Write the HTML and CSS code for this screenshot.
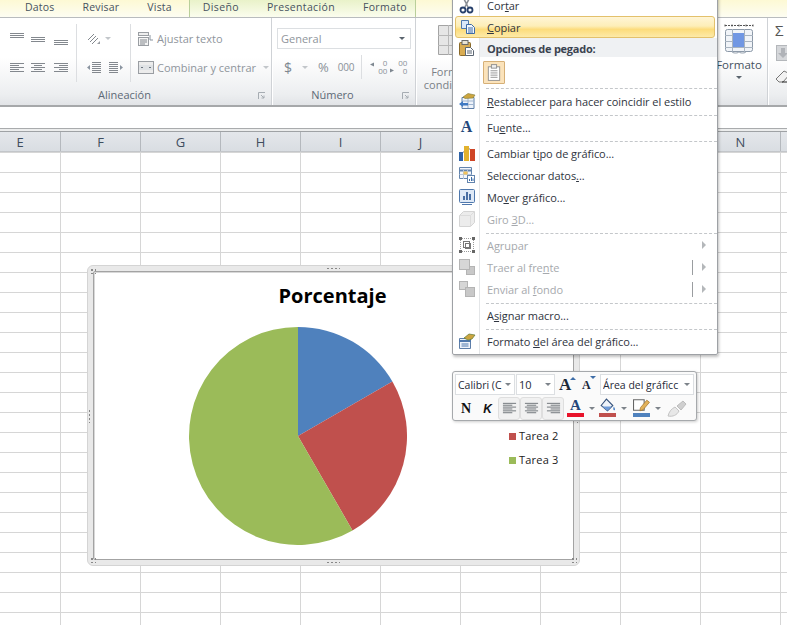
FILE: index.html
```html
<!DOCTYPE html>
<html lang="es">
<head>
<meta charset="utf-8">
<title>Excel</title>
<link rel="stylesheet" href="styles.css">
</head>
<body>
<div class="app">
  <nav class="tabs">
    <span class="tab">Datos</span><span class="tab">Revisar</span><span class="tab">Vista</span>
    <div class="ctx-tabs"><span class="tab">Diseño</span><span class="tab">Presentación</span><span class="tab">Formato</span></div>
  </nav>

  <section class="ribbon">
    <div class="group g-align">
      <div class="g-body">
        <div class="cluster c-align">
          <svg class="ic16" viewBox="0 0 16 16"><path class="ln" d="M1 2.500h14M1 4.500h14M1 6.500h14"/></svg>
          <svg class="ic16" viewBox="0 0 16 16"><path class="ln" d="M1 6.500h14M1 8.500h14M1 10.500h14"/></svg>
          <svg class="ic16" viewBox="0 0 16 16"><path class="ln" d="M1 9.500h14M1 11.500h14M1 13.500h14"/></svg>
          <svg class="ic16" viewBox="0 0 16 16"><path class="ln" d="M1 3.500h14M1 5.500h9M1 7.500h14M1 9.500h9M1 11.500h14"/></svg>
          <svg class="ic16" viewBox="0 0 16 16"><path class="ln" d="M1 3.500h14M4 5.500h8M1 7.500h14M4 9.500h8M1 11.500h14"/></svg>
          <svg class="ic16" viewBox="0 0 16 16"><path class="ln" d="M1 3.500h14M6 5.500h9M1 7.500h14M6 9.500h9M1 11.500h14"/></svg>
        </div>
        <div class="cluster c-orient">
          <div class="ic-pair">
            <svg class="ic16" viewBox="0 0 16 16"><path class="ln" d="M2 9l6-6M4 11l6-6M6 13l6-6"/><path d="M11 13l3-3v3z" fill="#9a9ea3"/></svg>
            <span class="caret light"></span>
          </div>
          <div class="ic-pair indent">
            <svg class="ic16" viewBox="0 0 16 16"><path class="ln" d="M6 2.500h9M6 4.500h9M6 6.500h9M6 8.500h9M6 10.500h9M6 12.500h9"/><path d="M1 7.500l3-2.500v5z" fill="#8a94a0"/></svg>
            <svg class="ic16" viewBox="0 0 16 16"><path class="ln" d="M1 2.500h9M1 4.500h9M1 6.500h9M1 8.500h9M1 10.500h9M1 12.500h9"/><path d="M15 7.500l-3-2.500v5z" fill="#8a94a0"/></svg>
          </div>
        </div>
        <div class="cluster c-wrap">
          <div class="ic-label">
            <svg class="ic16" viewBox="0 0 16 16"><rect x="0.500" y="1.500" width="10" height="3" fill="#eee" stroke="#9a9ea3"/><rect x="0.500" y="6.500" width="10" height="8" fill="#f4f4f4" stroke="#9a9ea3"/><path class="ln" d="M2 9h7M2 11h7M2 13h5"/><path d="M12 4v5h3" fill="none" stroke="#8a94a0"/></svg>
            <span>Ajustar texto</span>
          </div>
          <div class="ic-label">
            <svg class="ic16" viewBox="0 0 16 16"><rect x="0.500" y="1.500" width="15" height="12" fill="#ececec" stroke="#9a9ea3"/><rect x="1" y="5" width="14" height="5" fill="#dfe2e5"/><path d="M3 7.500h2M11 7.500h2" stroke="#6d7680"/></svg>
            <span>Combinar y centrar</span><span class="caret light m6"></span>
          </div>
        </div>
      </div>
      <div class="g-label"><span>Alineación</span><svg class="launch" viewBox="0 0 8 8"><path d="M.5 7V.500H7M3 3l3 3M6 3.500V6H3.500" fill="none" stroke="#a6acb2"/></svg></div>
    </div>

    <div class="group g-num">
      <div class="g-body col">
        <div class="combo num-combo"><span>General</span><span class="caret dark"></span></div>
        <div class="num-row">
          <span class="sym dollar">$</span><span class="caret light"></span>
          <span class="sym pct">%</span><span class="sym mil">000</span>
          <span class="v-sep"></span>
          <span class="dec"><svg viewBox="0 0 18 16"><path d="M0 5.500l4-2v4z" fill="#7e8790"/></svg><span class="dec-t"><i>0</i><i>00</i></span></span>
          <span class="dec"><svg viewBox="0 0 18 16"><path d="M4 11.500l-4-2v4z" fill="#7e8790"/></svg><span class="dec-t"><i>00</i><i>0</i></span></span>
        </div>
      </div>
      <div class="g-label"><span>Número</span><svg class="launch" viewBox="0 0 8 8"><path d="M.5 7V.500H7M3 3l3 3M6 3.500V6H3.500" fill="none" stroke="#a6acb2"/></svg></div>
    </div>

    <div class="group g-styles">
      <div class="big first">
        <svg class="ic-big" viewBox="0 0 30 30"><path d="M.5.500h29v29H.5z" fill="#e6e6e6" stroke="#a4a4a4"/><path d="M10.500 0v30M20.500 0v30M0 10.500h30M0 20.500h30" stroke="#b8b8b8"/></svg>
        <span>Formato<br>condicional</span>
      </div>
      <div class="big">
        <svg class="ic-big" viewBox="0 0 30 30">
          <path d="M1 1.500h28M1 .5v2M8 .5v2M15 .5v2M22 .5v2M29 .5v2" stroke="#555" fill="none" stroke-dasharray="2 1"/>
          <rect x="1.500" y="5.500" width="27" height="22" rx="2" fill="#f1f4f8" stroke="#8c99a8"/>
          <path d="M1 11.500h28M1 17.500h28M1 23.500h28M8.500 5v23M20.500 5v23" stroke="#a9b4c0"/>
          <rect x="9" y="9" width="11" height="14" fill="#7197e3"/>
          <path d="M8 27.500c0 2 7 2 7 0M15 27.500c0 2 7 2 7 0" fill="none" stroke="#8c99a8"/>
        </svg>
        <span>Formato</span>
        <span class="caret dark"></span>
      </div>
    </div>

    <div class="group g-edit">
      <span class="sigma">Σ</span>
      <svg class="ic16" viewBox="0 0 16 16"><rect x="1.500" y="0.500" width="13" height="15" fill="#d5d7da" stroke="#b4b7bb"/><path d="M6 3h4v5h3l-5 5-5-5h3z" fill="#b0b3b8"/></svg>
      <svg class="ic16" viewBox="0 0 16 16"><path d="M1 11l8-8 6 3-7 8H4z" fill="#f2f2f2" stroke="#777"/><path d="M7 14h8" stroke="#222"/></svg>
    </div>
  </section>

  <div class="formula"></div>
  <div class="gap-line"></div>

  <div class="col-head">
    <span class="ch first">E</span><span class="ch">F</span><span class="ch">G</span><span class="ch">H</span><span class="ch">I</span><span class="ch">J</span><span class="ch">K</span><span class="ch">L</span><span class="ch">M</span><span class="ch">N</span>
  </div>
  <div class="sheet"></div>

  <figure class="chart">
    <span class="dots d-tl"></span><span class="dots d-tc"></span><span class="dots d-tr"></span>
    <span class="dots d-bl"></span><span class="dots d-bc"></span><span class="dots d-br"></span>
    <span class="dots d-lc"></span><span class="dots d-rc"></span>
    <div class="chart-in">
      <h2 class="chart-title">Porcentaje</h2>
      <div class="plot">
        <svg class="pie" viewBox="0 0 218 218">
          <path d="M109 109V0A109 109 0 0 1 203.400 54.500z" fill="#4f81bd"/>
          <path d="M109 109L203.400 54.500A109 109 0 0 1 163.500 203.400z" fill="#c0504d"/>
          <path d="M109 109L163.500 203.400A109 109 0 1 1 109 0z" fill="#9bbb59"/>
        </svg>
        <ul class="legend">
          <li><i class="sw blue"></i>Tarea 1</li>
          <li><i class="sw red"></i>Tarea 2</li>
          <li><i class="sw green"></i>Tarea 3</li>
        </ul>
      </div>
    </div>
  </figure>

  <aside class="menu">
    <div class="mi"><span class="mi-ic"><svg viewBox="0 0 18 18"><path d="M5 1l5 10M12 1L7 11" stroke="#8a8f96" stroke-width="1.600" fill="none"/><circle cx="5" cy="14" r="2.500" fill="none" stroke="#27406b" stroke-width="1.800"/><circle cx="12" cy="14" r="2.500" fill="none" stroke="#27406b" stroke-width="1.800"/></svg></span><span class="mi-t">Cor<u>t</u>ar</span></div>
    <div class="mi hot"><span class="mi-ic"><svg viewBox="0 0 18 18"><path d="M1.500 2.500h7v8h-7z" fill="#dbe8f8" stroke="#4f78ad"/><path d="M6.500 6.500h5l3 3v6h-8z" fill="#f3f7fd" stroke="#3c6aa5"/><path d="M8 10h5M8 12h5M8 14h5" stroke="#3c6aa5"/></svg></span><span class="mi-t"><u>C</u>opiar</span></div>
    <div class="mi head"><span class="mi-ic"><svg viewBox="0 0 18 18"><rect x="1.500" y="3.500" width="11" height="13" rx="1" fill="#d9ac52" stroke="#8a6a2a"/><rect x="4" y="1.500" width="6" height="4" fill="#e9e4d4" stroke="#6b6b6b"/><path d="M7.500 8.500h5l3 3v5h-8z" fill="#fff" stroke="#5c6672"/><path d="M9 12h5M9 14h5" stroke="#5c6672"/></svg></span><span class="mi-t">Opciones de pegado:</span></div>
    <div class="paste-row"><span class="paste-btn"><svg viewBox="0 0 16 20"><rect x="1.500" y="3.500" width="13" height="15.500" fill="#fff" stroke="#8b8b8b"/><rect x="5" y="1" width="6" height="4" fill="#eee" stroke="#8b8b8b"/><path d="M4 8h8M4 10.500h8M4 13h8M4 15.500h8" stroke="#8b8b8b"/></svg></span></div>
    <div class="sep s5"></div>
    <div class="mi"><span class="mi-ic"><svg viewBox="0 0 18 18"><path d="M4 5.500h12v11H4z" fill="#eef3fa" stroke="#5d7ea8"/><path d="M4 9h12M4 12.500h12M10 5v11" stroke="#9fb4cf"/><path d="M5 5l5-3.500 7 1.500-2 3-8 .5z" fill="#cda53f" stroke="#7e7a35" stroke-width=".6"/><path d="M1 12l4-3v2h5v2.500H5V15z" fill="#3f79c2"/></svg></span><span class="mi-t"><u>R</u>establecer para hacer coincidir el estilo</span></div>
    <div class="sep"></div>
    <div class="mi"><span class="mi-ic"><span class="font-a">A</span></span><span class="mi-t">Fu<u>e</u>nte...</span></div>
    <div class="sep"></div>
    <div class="mi"><span class="mi-ic"><svg viewBox="0 0 18 18"><rect x="1" y="8" width="4" height="9" fill="#2f63a8"/><rect x="6" y="2" width="5" height="15" fill="#e2b22e"/><rect x="12" y="5" width="5" height="12" fill="#cf4526"/><path d="M5 8h1M11 5h1" stroke="#777"/></svg></span><span class="mi-t">Cambiar t<u>i</u>po de gráfico...</span></div>
    <div class="mi"><span class="mi-ic"><svg viewBox="0 0 18 18"><path d="M1.500 1.500h12v11h-12z" fill="#f3f6fb" stroke="#6384ad"/><path d="M1 4.500h13" stroke="#6384ad" stroke-width="2"/><path d="M1.500 8.500h12M5.500 4v9M9.500 4v9" stroke="#b7c6da"/><rect x="5.500" y="5.500" width="4" height="3" fill="#f3c35a"/><rect x="9.500" y="9.500" width="7" height="7" fill="#fff" stroke="#6384ad"/><path d="M11.500 15v-2M13.500 15v-4M15 15v-2.500" stroke="#3f6ea8"/></svg></span><span class="mi-t">Seleccionar datos<u>.</u>..</span></div>
    <div class="mi"><span class="mi-ic"><svg viewBox="0 0 18 18"><rect x="1.500" y="1.500" width="15" height="13" rx="1" fill="#dfe9f6" stroke="#4f78ad"/><path d="M5 12V8h2v4zM8 12V4h2v8zM11 12V6h2v6z" fill="#4a6fa3"/><path d="M4 16.500h10" stroke="#4f78ad"/></svg></span><span class="mi-t">Mo<u>v</u>er gráfico...</span></div>
    <div class="mi off"><span class="mi-ic"><svg viewBox="0 0 18 18"><path d="M1.500 5.500l4-4h11v11l-4 4h-11z" fill="#ececec" stroke="#d4d4d4"/><path d="M1.500 5.500h11v11M12.500 5.500l4-4" fill="none" stroke="#dcdcdc"/></svg></span><span class="mi-t">Giro <u>3</u>D...</span></div>
    <div class="sep"></div>
    <div class="mi off"><span class="mi-ic"><svg viewBox="0 0 18 18"><path d="M2 2.500h14M2 15.500h14M2.500 2v14M15.500 2v14" stroke="#9a9a9a" stroke-dasharray="1 1"/><rect x="5.500" y="5.500" width="6" height="6" fill="none" stroke="#777"/><rect x="7.500" y="7.500" width="5" height="5" fill="none" stroke="#777"/><path d="M1 1h3v3H1zM14 1h3v3h-3zM1 14h3v3H1zM14 14h3v3h-3z" fill="#666"/></svg></span><span class="mi-t">A<u>g</u>rupar</span><span class="tri"></span></div>
    <div class="mi off"><span class="mi-ic"><svg viewBox="0 0 18 18"><rect x="8.500" y="8.500" width="8" height="8" fill="#c8c8c8" stroke="#b4b4b4"/><rect x="1.500" y="1.500" width="10" height="10" fill="#d6d6d6" stroke="#b4b4b4"/></svg></span><span class="mi-t">Traer al fre<u>n</u>te</span><span class="bar"></span><span class="tri"></span></div>
    <div class="mi off"><span class="mi-ic"><svg viewBox="0 0 18 18"><rect x="1.500" y="1.500" width="8" height="8" fill="#d6d6d6" stroke="#b4b4b4"/><rect x="7.500" y="7.500" width="9" height="9" fill="#c8c8c8" stroke="#b4b4b4"/></svg></span><span class="mi-t">Enviar al <u>f</u>ondo</span><span class="bar"></span><span class="tri"></span></div>
    <div class="sep"></div>
    <div class="mi"><span class="mi-ic"></span><span class="mi-t">A<u>s</u>ignar macro...</span></div>
    <div class="sep"></div>
    <div class="mi"><span class="mi-ic"><svg viewBox="0 0 18 18"><path d="M1.500 6.500h11v10h-11z" fill="#eef3fa" stroke="#5d7ea8"/><path d="M1 9h12" stroke="#4f78ad" stroke-width="2"/><path d="M3.500 12h7M3.500 14h7" stroke="#4f78ad"/><path d="M6 6l5-4 6 1-3 4-4 1z" fill="#cda53f" stroke="#5f7a35" stroke-width=".7"/></svg></span><span class="mi-t">Formato <u>d</u>el área del gráfico...</span></div>
  </aside>

  <aside class="mini">
    <div class="mini-row">
      <div class="combo m-font"><span class="clip-f">Calibri (C</span><span class="caret mid"></span></div>
      <div class="combo m-size"><span>10</span><span class="caret mid"></span></div>
      <span class="grow">A<i class="up"></i></span>
      <span class="shrink">A<i class="down"></i></span>
      <div class="combo m-area"><span class="clip">Área del gráficc</span><span class="caret mid"></span></div>
    </div>
    <div class="mini-row r2">
      <span class="fmt b">N</span>
      <span class="fmt k">K</span>
      <span class="al-set">
        <span class="al"><svg viewBox="0 0 16 16"><path class="ln2" d="M1 2.500h14M1 4.500h10M1 6.500h14M1 8.500h10M1 10.500h14M1 12.500h10"/></svg></span>
        <span class="al"><svg viewBox="0 0 16 16"><path class="ln2" d="M1 2.500h14M3 4.500h10M1 6.500h14M3 8.500h10M1 10.500h14M3 12.500h10"/></svg></span>
        <span class="al"><svg viewBox="0 0 16 16"><path class="ln2" d="M1 2.500h14M5 4.500h10M1 6.500h14M5 8.500h10M1 10.500h14M5 12.500h10"/></svg></span>
      </span>
      <span class="colbtn c-a"><span class="a-glyph">A</span><i class="cbar r"></i></span><span class="caret mid sm"></span>
      <span class="colbtn c-f"><svg viewBox="0 0 16 14"><path d="M2 7l5-6 6 6-5 5z" fill="#eef3fa" stroke="#33507a"/><path d="M3 8h9l-4 4z" fill="#6f9bd8"/><path d="M14 8c1 2 1.500 3 .5 3.500S13 10 14 8z" fill="#3f79c2"/></svg><i class="cbar br"></i></span><span class="caret mid sm"></span>
      <span class="colbtn c-p"><svg viewBox="0 0 16 14"><path d="M.5 1.500h10v10H.5z" fill="#fff" stroke="#666"/><path d="M7 9l6-7 2.500 2-6 7-3 1z" fill="#e2b25a" stroke="#a5762e" stroke-width=".7"/></svg><i class="cbar bl"></i></span><span class="caret mid sm"></span>
      <svg class="brush" viewBox="0 0 20 18"><path d="M1 16c1-4 3-7 7-9l4 4c-2 4-6 6-11 5z" fill="#e7e7e7" stroke="#c4c4c4"/><path d="M10 6l6-5 3 3-5 6z" fill="#cfcfcf" stroke="#bcbcbc"/></svg>
    </div>
  </aside>
</div>
</body>
</html>
```

FILE: styles.css
```css
* { box-sizing: border-box; }
html, body { margin: 0; padding: 0; }
body { font-family: "Open Sans", "Noto Sans", sans-serif; background: #fff; }

.app { position: relative; width: 787px; height: 625px; overflow: hidden; background: #fff; }

/* tabs */
.tabs { display: flex; height: 18px; padding: 0 0 0 11px; font-size: 10.5px; line-height: 14px; letter-spacing: .2px; color: #46525f; background: linear-gradient(#fdf9d4, #fdfdf2); border-bottom: 1px solid #b9bcbe; }
.tab { padding: 0 14px; }
.ctx-tabs { display: flex; flex: none; margin-left: 3px; width: 227px; letter-spacing: .35px; background: linear-gradient(#e9f2c9, #fbfdee); border-left: 1px solid #b9cf9a; border-right: 1px solid #b9cf9a; }
.ctx-tabs .tab:first-child { padding-left: 13px; }

/* ribbon */
.ribbon { display: flex; height: 87px; background: linear-gradient(#fff 0, #fff 45%, #eceef0 88%, #e2e4e7 100%); }
.group { flex: none; display: flex; flex-direction: column; border-right: 1px solid #cfd2d6; box-shadow: 1px 0 0 #fff; }
.g-align { width: 272px; }
.g-num { width: 144px; }
.g-styles { width: 352px; flex-direction: row; justify-content: space-between; }
.g-edit { flex: 1 1 0; min-width: 0; border: 0; box-shadow: none; padding: 4px 0 0 7px; gap: 7px; }
.g-body { height: 67px; display: flex; padding-top: 6px; }
.g-body.col { flex-direction: column; padding: 10px 4px 0 5px; }
.g-label { position: relative; height: 19px; padding-right: 22px; display: flex; align-items: center; justify-content: center; font-size: 11px; color: #5d6976; }
.launch { position: absolute; right: 5px; top: 7px; width: 8px; height: 8px; }

.ic16 { display: block; width: 16px; height: 16px; }
.ln { stroke: #83888e; fill: none; stroke-width: 1; }
.ln2 { stroke: #6d7278; fill: none; stroke-width: 1; }

.cluster { height: 58px; }
.c-align { width: 77px; padding-left: 9px; display: grid; grid-template-columns: 21px 23px 22px; grid-auto-rows: 29px; align-items: center; border-right: 1px solid #dcdee1; }
.c-orient { width: 54px; padding-left: 9px; display: flex; flex-direction: column; border-right: 1px solid #dcdee1; }
.ic-pair { height: 29px; display: flex; align-items: center; gap: 3px; }
.ic-pair.indent { gap: 6px; }
.c-wrap { padding-left: 7px; display: flex; flex-direction: column; }
.ic-label { height: 29px; display: flex; align-items: center; gap: 3px; font-size: 11px; color: #8f959c; white-space: nowrap; }
.m6 { margin-left: 4px; }

.caret { display: inline-block; width: 0; height: 0; border-left: 3px solid transparent; border-right: 3px solid transparent; border-top: 3px solid #66707a; flex: none; }
.caret.light { border-top-color: #c2c6ca; }
.caret.dark { border-top-color: #5a646e; }
.caret.mid { border-top-color: #7d838a; }

.combo { display: flex; align-items: center; justify-content: space-between; background: #fff; border: 1px solid #dcdfe2; white-space: nowrap; }
.num-combo { width: 134px; height: 22px; flex: none; padding: 0 5px 0 3px; font-size: 11px; color: #8f959c; }
.num-row { display: flex; align-items: center; height: 36px; color: #8a9198; }
.sym { font-size: 12px; }
.dollar { margin: 0 10px 0 7px; color: #7e8790; font-size: 14px; }
.pct { margin-left: 10px; font-size: 13px; }
.mil { margin-left: 9px; font-size: 10px; letter-spacing: -.2px; }
.v-sep { width: 1px; height: 24px; margin: 0 8px 0 7px; background: #dcdee1; }
.dec { position: relative; display: block; width: 18px; height: 16px; margin-right: 2px; }
.dec svg { position: absolute; inset: 0; }
.dec-t { position: absolute; right: 1px; top: 0; display: flex; flex-direction: column; align-items: flex-end; font-size: 8px; line-height: 8px; }
.dec-t i { font-style: normal; }

.big { display: flex; flex-direction: column; align-items: center; font-size: 11px; line-height: 13px; color: #4e5966; text-align: center; }
.big.first { margin-left: 7px; padding-top: 7px; width: 60px; color: #7a8086; }
.big.first span { margin-top: 10px; display: block; }
.big:last-child { width: 50px; margin-right: 3px; padding-top: 6px; color: #46525f; }
.ic-big { width: 30px; height: 30px; flex: none; }
.big:last-child span:not(.caret) { margin-top: 4px; font-size: 11.5px; letter-spacing: 0; }
.big:last-child .caret { margin-top: 5px; }

.sigma { font-size: 15px; line-height: 16px; color: #555; }

.formula { height: 23px; background: #fff; border-top: 2px solid #a6a8aa; }
.gap-line { height: 3px; background: #eceded; border-top: 1px solid #a9abad; }

.col-head { display: flex; height: 21px; background: linear-gradient(#e4e7eb, #d9dde2); border-top: 1px solid #9fa2a5; border-bottom: 1px solid #c3c6ca; }
.ch { flex: none; width: 80px; display: flex; align-items: center; justify-content: center; font-size: 13px; color: #3f4d5e; border-right: 1px solid #b4b8bd; }
.ch.first { width: 81px; margin-left: -20px; }

.sheet { height: 473px; background-color: #fff; background-image: linear-gradient(90deg, #d6d6d6 1px, transparent 1px), linear-gradient(#d6d6d6 1px, transparent 1px); background-size: 80px 100%, 100% 20px; background-position: 60px 0, 0 0; }

/* chart */
.chart { position: absolute; left: 87px; top: 265px; width: 493px; height: 301px; margin: 0; padding: 5px; background: #e9e9e9; border: 1px solid #d4d4d4; border-radius: 6px; }
.chart-in { width: 481px; height: 289px; background: #fff; border: 1px solid #a3a3a3; box-shadow: inset 1px 1px 0 #d8d8d8; border-radius: 2px; }
.chart-title { margin: 0; padding: 11px 2px 0 0; height: 55px; text-align: center; font-family: "Open Sans", sans-serif; font-size: 20px; line-height: 26px; font-weight: 700; color: #000; }
.plot { display: flex; align-items: center; padding-left: 95px; }
.pie { display: block; width: 218px; height: 218px; flex: none; }
.legend { margin: 0 0 0 102px; padding: 0; list-style: none; font-size: 11px; line-height: 24px; color: #222; }
.legend li { display: flex; align-items: center; gap: 3px; letter-spacing: .2px; }
.sw { width: 7px; height: 7px; display: block; }
.sw.blue { background: #4f81bd; } .sw.red { background: #c0504d; } .sw.green { background: #9bbb59; }

.dots { position: absolute; width: 4px; height: 4px; background-image: radial-gradient(#888 40%, transparent 50%); background-size: 2px 2px; }
.d-tl { left: 2px; top: 2px; width: 6px; height: 6px; background-size: 4px 4px; }
.d-tr { right: 2px; top: 2px; width: 6px; height: 6px; background-size: 4px 4px; }
.d-bl { left: 2px; bottom: 2px; width: 6px; height: 6px; background-size: 4px 4px; }
.d-br { right: 2px; bottom: 2px; width: 6px; height: 6px; background-size: 4px 4px; }
.d-tc { left: 238px; top: 1px; width: 14px; height: 3px; background-size: 4px 3px; }
.d-bc { left: 238px; bottom: 1px; width: 14px; height: 3px; background-size: 4px 3px; }
.d-lc { left: 0; top: 143px; width: 3px; height: 14px; background-size: 3px 4px; }
.d-rc { right: 0; top: 143px; width: 3px; height: 14px; background-size: 3px 4px; }

/* context menu */
.menu { position: absolute; left: 452px; top: -7px; width: 266px; height: 362px; background: linear-gradient(90deg, #fff 26px, #e4e6e8 26px, #e4e6e8 27px, #fff 27px); border: 1px solid #9ea1a5; border-radius: 2px; box-shadow: 1px 2px 3px rgba(0,0,0,.25); font-size: 11px; color: #2f3540; }
.mi { display: flex; align-items: center; height: 22px; }
.mi-ic { flex: none; width: 27px; height: 18px; display: flex; align-items: center; justify-content: center; }
.mi-ic svg { display: block; width: 18px; height: 18px; }
.mi-t { margin-left: 7px; white-space: nowrap; letter-spacing: -.05px; flex: 1; }
.mi.hot { margin: 0 2px; background: linear-gradient(#fff5d6, #fdeeb8 45%, #fcdc7c 62%, #fdeaa8); border: 1px solid #e3c16c; border-radius: 3px; }
.mi.hot .mi-ic { width: 25px; }
.mi.hot .mi-t { margin-left: 6px; }
.mi.off { color: #a6a9ad; }
.mi.head { height: 19px; padding-top: 1px; background: linear-gradient(90deg, transparent 27px, #eff1f3 27px); font-weight: 700; color: #3a4350; }
.mi.head .mi-t { letter-spacing: -.25px; }
.paste-row { height: 28px; padding: 4px 0 0 30px; }
.paste-btn { display: flex; align-items: center; justify-content: center; width: 22px; height: 23px; background: #fbe3bb; border: 1px solid #d6b077; border-radius: 1px; }
.paste-btn svg { width: 14px; height: 19px; display: block; }
.sep { margin: -1px 0 0 33px; height: 5px; border-bottom: 1px dashed #c4c7ca; }
.sep.s5 { margin-top: 0; margin-bottom: 1px; height: 4px; }
.font-a { font-family: "Liberation Serif", serif; font-weight: 700; font-size: 16px; line-height: 18px; color: #23477a; }
.tri { flex: none; width: 0; height: 0; margin-right: 11px; border-top: 4px solid transparent; border-bottom: 4px solid transparent; border-left: 4px solid #b4b7ba; }
.bar { flex: none; width: 1px; height: 15px; margin-right: 9px; background: #9a9da0; }

/* mini toolbar */
.mini { position: absolute; left: 452px; top: 371px; width: 245px; height: 50px; padding: 2px; background: #fafafa; border: 1px solid #a6a9ac; border-radius: 3px; box-shadow: 1px 1px 3px rgba(0,0,0,.2); font-size: 11px; color: #1f2a38; }
.mini-row { display: flex; align-items: center; height: 21px; }
.combo { height: 21px; }
.m-font { width: 60px; padding: 0 3px 0 2px; font-size: 10.5px; margin-right: 1px; }
.clip-f { display: block; width: 45px; overflow: hidden; }
.m-size { width: 39px; padding: 0 3px 0 2px; font-size: 11px; }
.m-area { width: 94px; padding: 0 3px 0 2px; font-size: 10.5px; margin-left: 1px; overflow: hidden; }
.clip { display: block; width: 80px; overflow: hidden; }
.grow, .shrink { position: relative; display: block; font-family: "Liberation Serif", serif; font-weight: 700; color: #1d2a3a; text-align: left; }
.grow { width: 23px; margin-left: 4px; font-size: 17px; line-height: 21px; }
.shrink { width: 17px; font-size: 12px; line-height: 24px; }
.up, .down { position: absolute; width: 0; height: 0; border-left: 3px solid transparent; border-right: 3px solid transparent; }
.up { left: 11px; top: 3px; border-bottom: 3px solid #3f6ea8; }
.down { left: 8px; top: 3px; border-top: 3px solid #3f6ea8; }
.mini-row.r2 { height: 23px; margin-top: 2px; }
.fmt { display: block; width: 22px; text-align: center; font-family: "Liberation Serif", serif; font-weight: 700; font-size: 14px; color: #111; }
.fmt.k { width: 21px; font-style: italic; font-family: "Liberation Sans", sans-serif; font-size: 12px; }
.al-set { display: flex; }
.al { display: flex; align-items: center; justify-content: center; width: 22px; height: 23px; background: #f1f1f1; border: 1px solid #dedede; border-radius: 3px; }
.al svg { width: 15px; height: 15px; display: block; }
.colbtn { position: relative; display: block; width: 17px; height: 21px; margin-left: 4px; }
.colbtn svg { position: absolute; left: 0; top: 0; width: 17px; height: 15px; }
.c-a { margin-left: 3px; }
.c-p { margin-left: 6px; }
.a-glyph { position: absolute; left: 0; right: 0; top: -2px; text-align: center; font-family: "Liberation Serif", serif; font-weight: 700; font-size: 15px; line-height: 18px; color: #23477a; }
.cbar { position: absolute; left: 0; bottom: 2px; width: 17px; height: 4px; }
.cbar.r { background: #e8132a; } .cbar.br { background: #c0504d; } .cbar.bl { background: #4f81bd; }
.sm { margin-left: 5px; }
.brush { width: 20px; height: 18px; margin-left: 6px; display: block; }
```
